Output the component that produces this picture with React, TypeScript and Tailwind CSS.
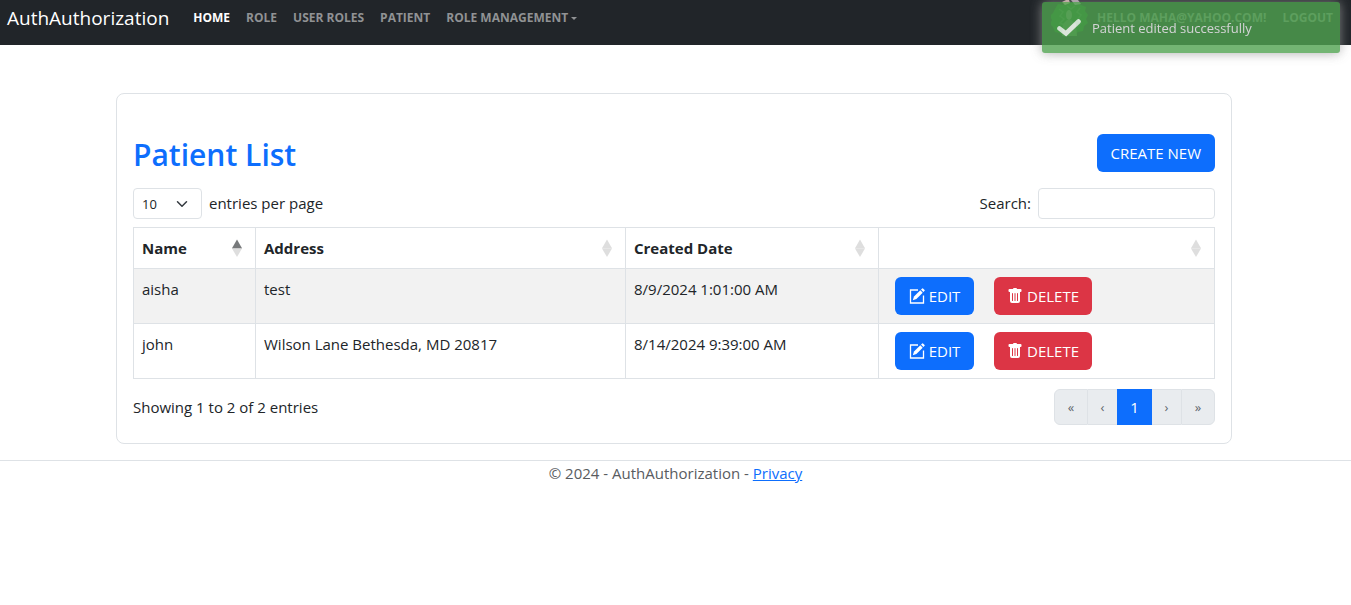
import { BsTrashFill } from 'react-icons/bs';

const navLinks = ['ROLE', 'USER ROLES', 'PATIENT'];

const columns = [
  { label: 'Name', width: 'w-[122px]', sorted: true },
  { label: 'Address', width: 'w-[370px]', sorted: false },
  { label: 'Created Date', width: 'w-[253px]', sorted: false },
  { label: '', width: '', sorted: false },
];

const patients = [
  { name: 'aisha', address: 'test', created: '8/9/2024 1:01:00 AM' },
  { name: 'john', address: 'Wilson Lane Bethesda, MD 20817', created: '8/14/2024 9:39:00 AM' },
];

function SortIcon({ sorted }: { sorted: boolean }) {
  return (
    <svg viewBox="0 0 10 18" className="h-[18px] w-[10px] shrink-0" aria-hidden="true">
      <path d="M5 0.5 10.2 9.500H-0.2Z" fill={sorted ? '#77797b' : '#dedede'} />
      <path d="M0 9.500H10L5 18Z" fill="#dedede" />
    </svg>
  );
}

function EditIcon() {
  return (
    <svg viewBox="0 0 16 16" className="h-4 w-4" fill="none" stroke="currentColor" aria-hidden="true">
      <path d="M9 2H1.500V15H14.500V7.500" strokeWidth="1.300" />
      <path d="M3.800 12.200 5 8.600 11.300 2.300 13.700 4.700 7.400 11Z" fill="currentColor" stroke="none" />
      <path d="M12 1.600 13.200 0.400Q13.600 0 14 0.400L15.600 2Q16 2.400 15.600 2.800L14.400 4Z" fill="currentColor" stroke="none" />
    </svg>
  );
}

function Avatar() {
  return (
    <svg viewBox="0 0 38 38" className="h-[38px] w-[38px]" aria-hidden="true">
      <path
        d="M4 9 7 4l5 1 3-3 6 1 5-1 4 3 5 2-1 4 3 4-2 4 2 4-4 3-1 5-5 1-4 4-5-1-5 2-4-4-5-1-2-5-3-3 2-4-2-4 3-3Z"
        fill="#186a1c"
      />
      <path d="M8 9l4 3-3 4 4 3-4 4 4 2M29 8l-3 4 4 3-3 4 3 4-4 4M16 6l4 3 4-3" fill="none" stroke="#348037" strokeWidth="1.500" />
      <path d="M11 2 15 0h3l1 3-5 2Z" fill="#d9b8b0" />
      <path d="M20 0h7l3 4-6 1Z" fill="#b9a9b5" />
      <ellipse cx="18" cy="15" rx="3" ry="5" fill="#6f9068" />
      <path d="M16 20h4l5 4 1 12H11l1-12Z" fill="#4c7c48" />
    </svg>
  );
}

function Header() {
  return (
    <header className="flex h-[45px] items-start bg-[#212529] pl-[7px] pr-[18px]">
      <a href="#" className="mr-6 text-[19px] leading-9 text-white">AuthAuthorization</a>
      <nav className="flex grow items-start gap-4 text-[12px] font-bold leading-9 text-[#909294]">
        <a href="#" className="text-white">HOME</a>
        {navLinks.map((label) => (
          <a key={label} href="#">{label}</a>
        ))}
        <button type="button" className="flex items-center gap-[3px]">
          ROLE MANAGEMENT
          <svg viewBox="0 0 6 3" className="h-[3px] w-[6px]" aria-hidden="true">
            <path d="M0 0H6L3 3Z" fill="currentColor" />
          </svg>
        </button>
        <div className="ml-auto flex items-start gap-4">
          <span className="-mr-2"><Avatar /></span>
          <a href="#">HELLO MAHA@YAHOO.COM!</a>
          <a href="#">LOGOUT</a>
        </div>
      </nav>
    </header>
  );
}

function Toast() {
  return (
    <div
      role="status"
      className="fixed right-[11px] top-[2px] flex h-[51px] w-[298px] items-center rounded-[3px] bg-[#51a351] pl-[15px] text-[13px] font-medium text-white opacity-80 shadow-[0_0_12px_#999999]"
    >
      <svg viewBox="0 0 24 19" className="mr-[11px] h-[19px] w-[24px]" aria-hidden="true">
        <path d="M2.500 10.500 9 15.500 21.500 3.500" fill="none" stroke="#fff" strokeWidth="4.600" strokeLinecap="round" />
      </svg>
      Patient edited successfully
    </div>
  );
}

function Pagination() {
  return (
    <nav aria-label="Pages" className="flex h-9 text-[13px] text-[#5f666d]">
      <button type="button" aria-label="First" className="w-[34px] rounded-l-md border border-[#dee2e6] bg-[#e9ecef]">«</button>
      <button type="button" aria-label="Previous" className="w-[29px] border-y border-[#dee2e6] bg-[#e9ecef]">‹</button>
      <button type="button" aria-current="page" className="w-[35px] bg-[#0d6efd] text-[15px] text-white">1</button>
      <button type="button" aria-label="Next" className="w-[29px] border-y border-[#dee2e6] bg-[#e9ecef]">›</button>
      <button type="button" aria-label="Last" className="w-[34px] rounded-r-md border border-[#dee2e6] bg-[#e9ecef]">»</button>
    </nav>
  );
}

export default function App() {
  return (
    <div className="bg-white font-['Open_Sans',sans-serif] text-[15px] leading-6 text-[#212529]">
      <Header />
      <main className="ml-[116px] mr-[119px] mt-12 rounded-lg border border-[#dee2e6] px-4 pb-[18px] pt-10">
        <div className="flex items-start justify-between">
          <h1 className="text-[30px] font-semibold leading-[42px] text-[#0d6efd]">Patient List</h1>
          <a href="#" className="rounded-md bg-[#0d6efd] px-[14px] py-[7px] text-white">CREATE NEW</a>
        </div>
        <div className="mt-3 flex items-center justify-between">
          <div className="flex items-start gap-[7px] leading-[30px]">
            <span className="relative h-[31px]">
              <select id="size" className="block h-[31px] w-[69px] appearance-none rounded-[4px] border border-[#dee2e6] bg-white pl-2 text-[13px]">
                <option>10</option>
              </select>
              <svg viewBox="0 0 16 16" className="pointer-events-none absolute right-[14px] top-[10px] h-3 w-3" aria-hidden="true">
                <path d="m2 5 6 6 6-6" fill="none" stroke="#343a40" strokeWidth="2" strokeLinecap="round" strokeLinejoin="round" />
              </svg>
            </span>
            <label htmlFor="size">entries per page</label>
          </div>
          <div className="flex items-start gap-[7px] leading-[30px]">
            <label htmlFor="search">Search:</label>
            <input id="search" type="search" className="h-[31px] w-[177px] rounded-[4px] border border-[#dee2e6] px-2" />
          </div>
        </div>
        <table className="mt-2 w-full table-fixed border-collapse">
          <thead>
            <tr>
              {columns.map((c) => (
                <th key={c.label} className={`${c.width} border border-[#dee2e6] py-2 pl-2 pr-[13px] text-left font-bold`}>
                  <div className="flex h-6 items-center justify-between">
                    <span>{c.label}</span>
                    <SortIcon sorted={c.sorted} />
                  </div>
                </th>
              ))}
            </tr>
          </thead>
          <tbody>
            {patients.map((p) => (
              <tr key={p.name} className="align-top odd:bg-[#f2f2f2]">
                <td className="border border-[#dee2e6] p-2">{p.name}</td>
                <td className="border border-[#dee2e6] p-2">{p.address}</td>
                <td className="border border-[#dee2e6] p-2">{p.created}</td>
                <td className="border border-[#dee2e6] px-4 py-2">
                  <div className="flex gap-5 text-white">
                    <a href="#" className="flex h-[38px] w-[79px] items-center justify-center gap-1 rounded-md bg-[#0d6efd]">
                      <EditIcon />
                      EDIT
                    </a>
                    <button type="button" className="flex h-[38px] w-[98px] items-center justify-center gap-1 rounded-md bg-[#dc3545]">
                      <BsTrashFill className="h-4 w-4" />
                      DELETE
                    </button>
                  </div>
                </td>
              </tr>
            ))}
          </tbody>
        </table>
        <div className="mt-[10px] flex items-center justify-between">
          <p>Showing 1 to 2 of 2 entries</p>
          <Pagination />
        </div>
      </main>
      <footer className="mt-4 border-t border-[#dee2e6] text-center text-[#595c5f]">
        © 2024 - AuthAuthorization - <a href="#" className="text-[#0d6efd] underline">Privacy</a>
      </footer>
      <Toast />
    </div>
  );
}
